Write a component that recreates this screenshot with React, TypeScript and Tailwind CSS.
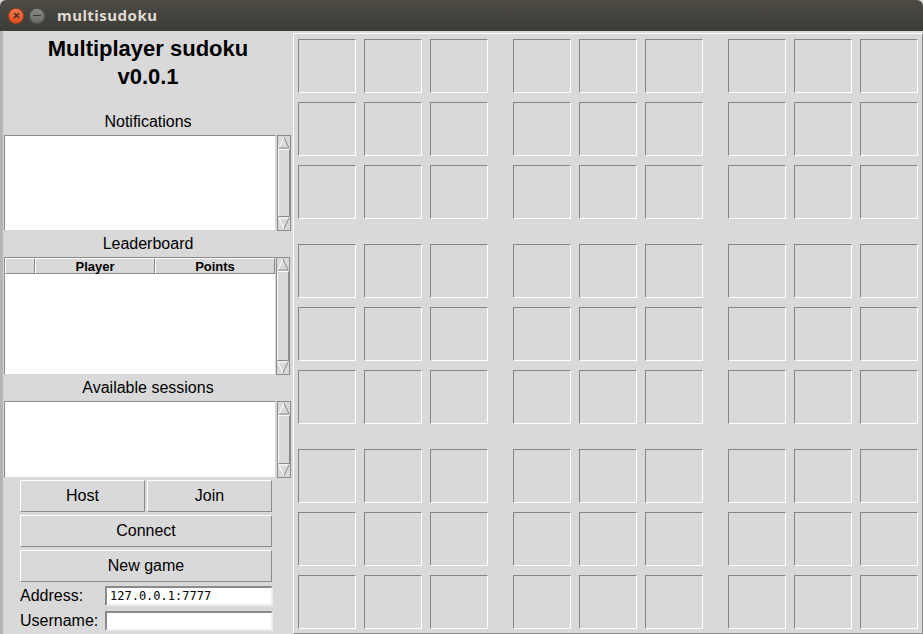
import React from 'react';

const sans = "font-['Liberation_Sans',Arial,sans-serif]";

const Arrow: React.FC<{ down?: boolean }> = ({ down }) => (
  <svg width="12" height="13" viewBox="0 0 12 13" className="block shrink-0">
    {down ? (
      <>
        <polygon points="1,1 11,1 6,12" fill="#d9d9d9" />
        <polyline points="1,1 11,1" stroke="#ffffff" fill="none" />
        <polyline points="1,1 6,12" stroke="#ffffff" fill="none" />
        <polyline points="11,1 6,12" stroke="#8a8a8a" fill="none" />
      </>
    ) : (
      <>
        <polygon points="6,1 11,12 1,12" fill="#d9d9d9" />
        <polyline points="6,1 1,12" stroke="#ffffff" fill="none" />
        <polyline points="6,1 11,12" stroke="#8a8a8a" fill="none" />
        <polyline points="1,12 11,12" stroke="#8a8a8a" fill="none" />
      </>
    )}
  </svg>
);

const Scrollbar: React.FC = () => (
  <div className="flex w-[14px] shrink-0 flex-col border border-[#8a8a8a] bg-[#d9d9d9]">
    <Arrow />
    <div className="flex-1 border border-t-white border-l-white border-r-[#8a8a8a] border-b-[#8a8a8a]" />
    <Arrow down />
  </div>
);

const Label: React.FC<{ children: React.ReactNode; h: string }> = ({ children, h }) => (
  <div className={`flex items-center justify-center text-[16px] text-black ${h}`}>{children}</div>
);

const Button: React.FC<{ children: React.ReactNode; className?: string }> = ({ children, className }) => (
  <div
    className={`flex items-center justify-center border border-t-white border-l-white border-r-[#8a8a8a] border-b-[#8a8a8a] bg-[#d9d9d9] text-[16px] text-black ${className ?? ''}`}
  >
    {children}
  </div>
);

const Entry: React.FC<{ value?: string }> = ({ value }) => (
  <div className="flex h-[20px] w-[168px] items-center border-2 border-t-[#8a8a8a] border-l-[#8a8a8a] border-r-[#ececec] border-b-[#ececec] bg-white pl-[3px] font-['DejaVu_Sans_Mono',monospace] text-[12px] text-black">
    {value}
  </div>
);

const Cell: React.FC = () => (
  <div className="h-[54px] w-[58px] border border-t-[#858585] border-l-[#858585] border-r-white border-b-white" />
);

const Block: React.FC = () => (
  <div className="grid grid-cols-3 gap-x-[8px] gap-y-[9px]">
    {Array.from({ length: 9 }).map((_, i) => (
      <Cell key={i} />
    ))}
  </div>
);

export default function App() {
  return (
    <div className={`flex h-[634px] w-[923px] flex-col overflow-hidden bg-[#d9d9d9] ${sans}`}>
      {/* Title bar */}
      <div className="flex h-[31px] shrink-0 items-center rounded-t-[6px] bg-gradient-to-b from-[#4e4b45] to-[#3c3b37] pl-[8px]">
        <div className="flex h-[16px] w-[16px] items-center justify-center rounded-full bg-gradient-to-b from-[#f37a4f] to-[#de4a1a] border border-[#b83d14]">
          <svg width="7" height="7" viewBox="0 0 7 7">
            <path d="M1 1 L6 6 M6 1 L1 6" stroke="#3b2a22" strokeWidth="1.4" />
          </svg>
        </div>
        <div className="ml-[5px] flex h-[16px] w-[16px] items-center justify-center rounded-full bg-gradient-to-b from-[#8a8883] to-[#6e6c68] border border-[#55534f]">
          <div className="h-[1.5px] w-[8px] bg-[#3a3935]" />
        </div>
        <span className="ml-[12px] font-['Noto_Sans',sans-serif] text-[15px] font-bold tracking-[0.5px] text-[#dfdbd2]">
          multisudoku
        </span>
      </div>

      <div className="flex flex-1">
        {/* window edge showing desktop behind */}
        <div className="w-[3px] shrink-0 bg-[#b4b4b4]" />

        {/* Left panel */}
        <div className="flex w-[290px] shrink-0 flex-col">
          <div className="pt-[4px] text-center text-[22px] font-bold leading-[28px] text-black">
            <div>Multiplayer sudoku</div>
            <div>v0.0.1</div>
          </div>
          <div className="h-[21px]" />
          <Label h="h-[20px]">Notifications</Label>
          <div className="mt-[3px] flex h-[96px] pl-[1px]">
            <div className="w-[272px] border border-t-[#8a8a8a] border-l-[#8a8a8a] border-r-[#d9d9d9] border-b-[#d9d9d9] bg-white" />
            <div className="ml-[1px] flex">
              <Scrollbar />
            </div>
          </div>
          <Label h="h-[26px]">Leaderboard</Label>
          <div className="flex h-[118px] pl-[1px]">
            <div className="flex w-[272px] flex-col border border-t-[#8a8a8a] border-l-[#8a8a8a] border-r-[#d9d9d9] border-b-[#d9d9d9] bg-white">
              <div className="flex h-[16px] bg-[#d9d9d9] text-[13px] font-bold leading-none text-black">
                <div className="w-[30px] border border-t-white border-l-white border-r-[#8a8a8a] border-b-[#8a8a8a]" />
                <div className="flex w-[120px] items-center justify-center border border-t-white border-l-white border-r-[#8a8a8a] border-b-[#8a8a8a]">
                  Player
                </div>
                <div className="flex flex-1 items-center justify-center border border-t-white border-l-white border-r-[#8a8a8a] border-b-[#8a8a8a]">
                  Points
                </div>
              </div>
            </div>
            <div className="flex">
              <Scrollbar />
            </div>
          </div>
          <Label h="h-[26px]">Available sessions</Label>
          <div className="flex h-[77px] pl-[1px]">
            <div className="w-[272px] border border-t-[#8a8a8a] border-l-[#8a8a8a] border-r-[#d9d9d9] border-b-[#d9d9d9] bg-white" />
            <div className="ml-[1px] flex">
              <Scrollbar />
            </div>
          </div>

          <div className="mt-[2px] flex flex-col gap-[3px] pl-[17px] pr-[21px]">
            <div className="flex gap-[2px]">
              <Button className="h-[32px] flex-1">Host</Button>
              <Button className="h-[32px] flex-1">Join</Button>
            </div>
            <Button className="h-[32px]">Connect</Button>
            <Button className="h-[32px]">New game</Button>
          </div>

          <div className="mt-[4px] flex flex-col gap-[5px] pl-[17px] pr-[20px] text-[16px] leading-[20px] text-black">
            <div className="flex items-center justify-between">
              <span>Address:</span>
              <Entry value="127.0.0.1:7777" />
            </div>
            <div className="flex items-center justify-between">
              <span>Username:</span>
              <Entry />
            </div>
          </div>
        </div>

        {/* Board frame */}
        <div className="mt-[2px] flex-1 border border-t-white border-l-white border-r-[#8a8a8a] border-b-[#8a8a8a] pl-[4px] pt-[5px]">
          <div className="grid w-fit grid-cols-3 gap-x-[25px] gap-y-[25px]">
            {Array.from({ length: 9 }).map((_, i) => (
              <Block key={i} />
            ))}
          </div>
        </div>
      </div>
    </div>
  );
}
